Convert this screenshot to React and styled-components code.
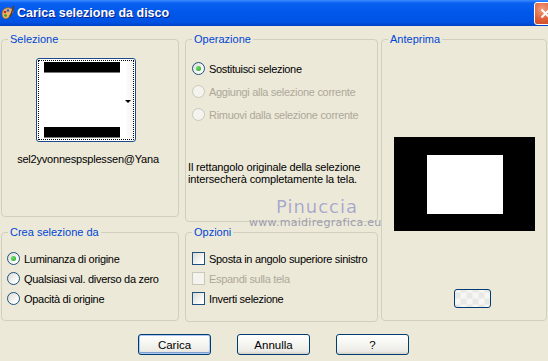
import React from "react";
import styled, { createGlobalStyle, css } from "styled-components";

const Global = createGlobalStyle`
  html, body { margin: 0; padding: 0; background: #ECE9D8; }
  body { font-family: "Liberation Sans", Arial, sans-serif; font-size: 11px; color: #000; }
`;

const Window = styled.div`
  width: 548px;
  height: 361px;
  background: #ECE9D8;
  overflow: hidden;
  position: relative;
`;

const TitleBar = styled.div`
  height: 26px;
  display: flex;
  align-items: center;
  background: linear-gradient(#3B8DFF 0px, #0A61F0 3px, #0058EB 12px, #0053E3 22px, #0042C8 26px);
  padding-left: 1px;
`;

const TitleText = styled.div`
  flex: 1;
  margin-left: 2px;
  color: #fff;
  font-family: "Liberation Sans", Arial, sans-serif;
  font-weight: bold;
  font-size: 12.5px;
  text-shadow: 1px 1px 0 #0A1E8C;
`;

const CloseBtn = styled.div`
  width: 21px;
  height: 21px;
  margin-right: -9px;
  border: 1px solid #fff;
  border-radius: 3px;
  background: radial-gradient(circle at 35% 30%, #F0A080 0%, #E0603A 50%, #C2411E 100%);
  display: flex;
  align-items: center;
  justify-content: center;
`;

const Body = styled.div`
  display: flex;
  padding: 7px 0 0 1px;
  gap: 6px;
`;

const Column = styled.div`
  display: flex;
  flex-direction: column;
  width: ${p => p.$w}px;
  gap: ${p => p.$gap || 0}px;
  margin-left: ${p => p.$ml || 0}px;
`;

const Group = styled.fieldset`
  margin: 0;
  padding: 0;
  min-width: 0;
  height: ${p => p.$h}px;
  box-sizing: border-box;
  border: 1px solid #D0D0BF;
  border-radius: 4px;
  display: flex;
  flex-direction: column;
`;

const Legend = styled.legend`
  color: #0046D5;
  font-size: 11px;
  line-height: 13px;
  padding: 0 2px;
  margin-left: 6px;
`;

const Thumb = styled.div`
  width: 100px;
  height: 84px;
  box-sizing: border-box;
  margin: 12px 0 0 34px;
  border: 1px solid #1C4A8A;
  border-radius: 3px;
  background: #fff;
  padding: 1px;
`;

const Focus = styled.div`
  height: 100%;
  box-sizing: border-box;
  border: 1px dotted #000;
  display: flex;
`;

const ThumbImg = styled.div`
  width: 78px;
  margin: 1px 0 0 5px;
  display: flex;
  flex-direction: column;
  justify-content: space-between;
`;

const Bar = styled.div`
  height: 10px;
  background: #000;
  border-bottom: 1px solid #777;
  margin-bottom: ${p => p.$mb || 0}px;
`;

const ThumbScroll = styled.div`
  flex: 1;
  margin-left: 5px;
  background: linear-gradient(90deg, #fff, #F2F2F0);
  display: flex;
  align-items: center;
  justify-content: flex-end;
  padding-right: 2px;
`;

const Arrow = styled.div`
  width: 0;
  height: 0;
  border-left: 3px solid transparent;
  border-right: 3px solid transparent;
  border-top: 3px solid #000;
  margin-top: 2px;
`;

const FileName = styled.div`
  text-align: center;
  margin-top: 11px;
  padding-right: 4px;
  font-size: 11px;
  letter-spacing: -0.2px;
  white-space: nowrap;
`;

const OptionList = styled.div`
  display: flex;
  flex-direction: column;
  gap: ${p => p.$gap}px;
  padding: ${p => p.$pt}px 0 0 ${p => p.$pl}px;
`;

const Option = styled.label`
  display: flex;
  align-items: center;
  gap: 4px;
  height: 13px;
  font-size: 11px;
  letter-spacing: -0.3px;
  white-space: nowrap;
  color: ${p => (p.$disabled ? "#ACA899" : "#000")};
`;

const Radio = styled.span`
  width: 13px;
  height: 13px;
  box-sizing: border-box;
  border-radius: 50%;
  border: 1px solid ${p => (p.$disabled ? "#CAC8BB" : "#1C5180")};
  background: ${p => (p.$disabled ? "#F4F3EE" : "linear-gradient(135deg, #DCDBD5 0%, #fff 80%)")};
  display: flex;
  align-items: center;
  justify-content: center;
  flex-shrink: 0;
  &::after {
    content: "";
    display: ${p => (p.$checked ? "block" : "none")};
    width: 5px;
    height: 5px;
    border-radius: 50%;
    background: radial-gradient(circle at 35% 35%, #6BE06B, #21A121);
  }
`;

const Check = styled.span`
  width: 13px;
  height: 13px;
  box-sizing: border-box;
  border: 1px solid ${p => (p.$disabled ? "#CAC8BB" : "#1C5180")};
  background: ${p => (p.$disabled ? "#F4F3EE" : "linear-gradient(135deg, #DCDBD5 0%, #fff 85%)")};
  flex-shrink: 0;
`;

const Note = styled.div`
  margin: 40px 0 0 2px;
  font-size: 11px;
  line-height: 12px;
  letter-spacing: -0.15px;
  white-space: nowrap;
`;

const Preview = styled.div`
  width: 141px;
  height: 94px;
  margin: 91px 0 0 12px;
  background: #000;
  display: flex;
  align-items: center;
  justify-content: center;
`;

const PreviewInner = styled.div`
  width: 76px;
  height: 59px;
  background: #fff;
  margin-top: 1px;
`;

const SmallBtn = styled.div`
  width: 37px;
  height: 19px;
  box-sizing: border-box;
  margin: 58px 0 0 72px;
  border: 1px solid #003C74;
  border-radius: 3px;
  background:
    repeating-conic-gradient(#F6F6F4 0 25%, #E8E8E4 0 50%) 50% 50% / 12px 12px;
`;

const Buttons = styled.div`
  display: flex;
  justify-content: center;
  gap: 26px;
  margin-top: 12px;
  padding-right: 1px;
`;

const Button = styled.button`
  width: 73px;
  height: 21px;
  box-sizing: border-box;
  border: 1px solid #003C74;
  border-radius: 3px;
  font-family: "Liberation Sans", Arial, sans-serif;
  font-size: 11.5px;
  color: #000;
  padding: 0;
  background: linear-gradient(#FFFFFF 0%, #F4F4F0 50%, #ECEBE6 85%, #D6D0C5 100%);
  ${p => p.$default && css`
    box-shadow: inset 0 0 0 1px #B0C8F0, inset 0 -1px 0 1px #7DA2CE;
  `}
`;

const Watermark = styled.div`
  position: absolute;
  left: 249px;
  top: 197px;
  width: 122px;
  text-align: center;
  pointer-events: none;
`;

const WmName = styled.div`
  font-family: "DejaVu Sans", sans-serif;
  font-size: 18px;
  letter-spacing: 1px;
  color: #A8A8C4;
  line-height: 20px;
  padding-left: 14px;
  text-shadow: 0 0 1px #fff;
`;

const WmUrl = styled.div`
  font-family: "DejaVu Sans", sans-serif;
  font-size: 11px;
  color: #9C9CB0;
  line-height: 12px;
  letter-spacing: 0.3px;
`;

function AppIcon() {
  return (
    <svg width="14" height="16" viewBox="0 0 14 16">
      <path d="M1 9 C1 4 5 2 9 3 C13 4 13 8 10 9 C8 10 9 12 7 13 C4 15 1 13 1 9 Z" fill="#E9B36A" stroke="#8A5A20" strokeWidth="0.8" />
      <circle cx="4" cy="7" r="1.3" fill="#D82020" />
      <circle cx="7" cy="5.5" r="1.3" fill="#2060E0" />
      <circle cx="4.5" cy="10.5" r="1.3" fill="#20A020" />
      <path d="M9 12 L13 1" stroke="#6A3A10" strokeWidth="1.4" />
    </svg>
  );
}

export default function App() {
  return (
    <Window>
      <Global />
      <TitleBar>
        <AppIcon />
        <TitleText>Carica selezione da disco</TitleText>
        <CloseBtn>
          <svg width="11" height="11" viewBox="0 0 11 11">
            <path d="M1.5 1.5 L9.5 9.5 M9.5 1.5 L1.5 9.5" stroke="#fff" strokeWidth="2" />
          </svg>
        </CloseBtn>
      </TitleBar>
      <Body>
        <Column $w={178} $gap={9}>
          <Group $h={184}>
            <Legend>Selezione</Legend>
            <Thumb>
              <Focus>
                <ThumbImg>
                  <Bar />
                  <Bar $mb={1} />
                </ThumbImg>
                <ThumbScroll><Arrow /></ThumbScroll>
              </Focus>
            </Thumb>
            <FileName>sel2yvonnespsplessen@Yana</FileName>
          </Group>
          <Group $h={95}>
            <Legend>Crea selezione da</Legend>
            <OptionList $gap={7} $pt={13} $pl={5}>
              <Option><Radio $checked />Luminanza di origine</Option>
              <Option><Radio />Qualsiasi val. diverso da zero</Option>
              <Option><Radio />Opacità di origine</Option>
            </OptionList>
          </Group>
        </Column>
        <Column $w={193} $gap={4}>
          <Group $h={189}>
            <Legend>Operazione</Legend>
            <OptionList $gap={10} $pt={16} $pl={6}>
              <Option><Radio $checked />Sostituisci selezione</Option>
              <Option $disabled><Radio $disabled />Aggiungi alla selezione corrente</Option>
              <Option $disabled><Radio $disabled />Rimuovi dalla selezione corrente</Option>
            </OptionList>
            <Note>
              Il rettangolo originale della selezione<br />
              intersecherà completamente la tela.
            </Note>
          </Group>
          <Group $h={96}>
            <Legend>Opzioni</Legend>
            <OptionList $gap={7} $pt={13} $pl={6}>
              <Option><Check />Sposta in angolo superiore sinistro</Option>
              <Option $disabled><Check $disabled />Espandi sulla tela</Option>
              <Option><Check />Inverti selezione</Option>
            </OptionList>
          </Group>
        </Column>
        <Column $w={166} $ml={-3}>
          <Group $h={288}>
            <Legend>Anteprima</Legend>
            <Preview><PreviewInner /></Preview>
            <SmallBtn />
          </Group>
        </Column>
      </Body>
      <Buttons>
        <Button $default>Carica</Button>
        <Button>Annulla</Button>
        <Button>?</Button>
      </Buttons>
      <Watermark>
        <WmName>Pinuccia</WmName>
        <WmUrl>www.maidiregrafica.eu</WmUrl>
      </Watermark>
    </Window>
  );
}
